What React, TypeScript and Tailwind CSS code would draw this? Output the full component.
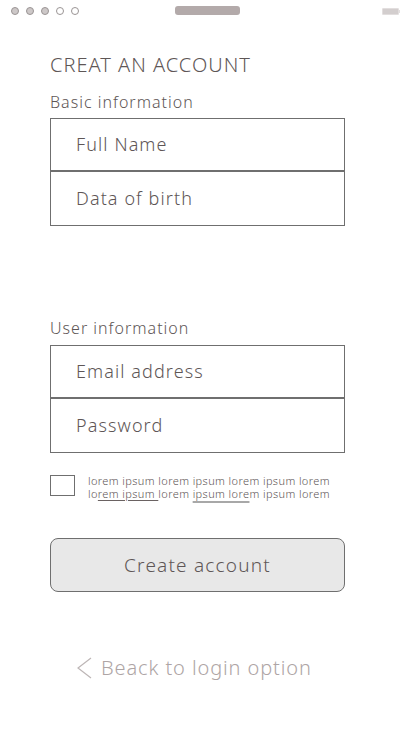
import React from "react";

const font = { fontFamily: '"Noto Sans", "Open Sans", sans-serif' };

function StatusBar() {
  return (
    <div className="relative flex h-[22px] items-center justify-between px-[11px]">
      <div className="flex items-center gap-[7px]">
        {[true, true, true, false, false].map((filled, i) => (
          <span
            key={i}
            className={
              "block h-[8px] w-[8px] rounded-full border border-[#9a9494] " +
              (filled ? "bg-[#cdc8c8]" : "bg-white")
            }
          />
        ))}
      </div>
      <div className="absolute left-[175px] top-[6px] h-[9px] w-[65px] rounded-[3px] bg-[#b3aaaa]" />
      <div className="mr-[3px] flex items-center">
        <div className="h-[7px] w-[17px] rounded-[1px] border border-[#e2dede] bg-[#d3cece]" />
        <div className="h-[3px] w-[1px] bg-[#e2dede]" />
      </div>
    </div>
  );
}

function Field({ label, top }: { label: string; top?: boolean }) {
  return (
    <div
      className={
        "flex h-[53px] items-center pl-[25px] text-[18px] font-light tracking-[1.1px] text-[#5e5656] " +
        (top ? "border-b-2 border-[#6f6f6f]" : "")
      }
    >
      {label}
    </div>
  );
}

export default function App() {
  return (
    <div className="min-h-[736px] w-[414px] bg-white font-light" style={font}>
      <StatusBar />
      <main className="ml-[50px] w-[295px]">
        <h1 className="mt-[30px] text-[20px] leading-[26px] tracking-[1px] text-[#5e5656]">
          CREAT AN ACCOUNT
        </h1>
        <p className="mt-[13px] text-[16px] leading-[22px] tracking-[1px] text-[#5e5656]">
          Basic information
        </p>
        <div className="mt-[5px] border border-[#6f6f6f]">
          <Field label="Full Name" top />
          <Field label="Data of birth" />
        </div>

        <p className="mt-[91px] text-[16px] leading-[22px] tracking-[1px] text-[#5e5656]">
          User information
        </p>
        <div className="mt-[6px] border border-[#6f6f6f]">
          <Field label="Email address" top />
          <Field label="Password" />
        </div>

        <div className="mt-[22px] flex items-start gap-[13px]">
          <div className="h-[21px] w-[25px] shrink-0 border border-[#6f6f6f]" />
          <p className="mt-[-1px] whitespace-nowrap text-[11px] leading-[13px] tracking-[0.4px] text-[#5e5656]">
            lorem ipsum lorem ipsum lorem ipsum lorem
            <br />
            lo
            <span className="underline decoration-[#6a6262] underline-offset-[2px]">rem ipsum </span>
            lorem{" "}
            <span className="underline decoration-[#a8a8a8] decoration-2 underline-offset-[3px]">ipsum lore</span>
            m ipsum lorem
          </p>
        </div>

        <button className="mt-[38px] flex h-[54px] w-full items-center justify-center rounded-[8px] border border-[#6f6f6f] bg-[#e8e8e8] text-[19px] tracking-[1.2px] text-[#5e5656]">
          Create account
        </button>

        <div className="mt-[61px] flex items-center pl-[26px] text-[20px] tracking-[0.9px] text-[#aea5a5]">
          <svg width="16" height="22" viewBox="0 0 16 22" className="mr-[9px]">
            <path d="M15 1 L2 11 L15 21" fill="none" stroke="#bdb6b6" strokeWidth="1.2" />
          </svg>
          Beack to login option
        </div>
      </main>
    </div>
  );
}
